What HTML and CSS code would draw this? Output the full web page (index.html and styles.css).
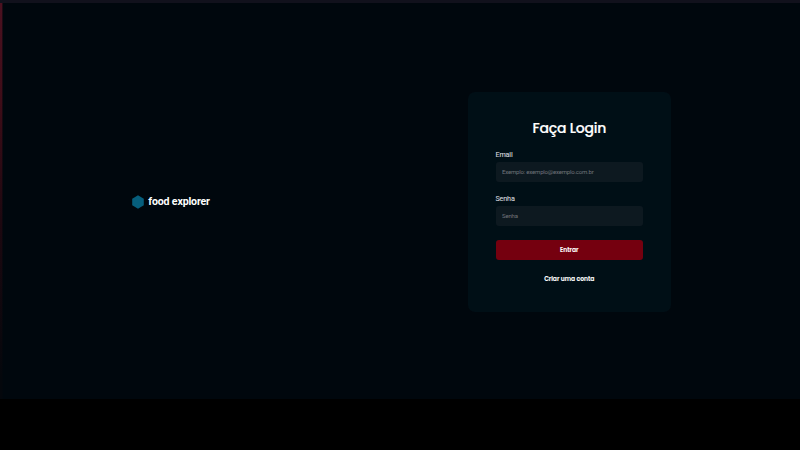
FILE: index.html
```html
<!DOCTYPE html>
<html lang="pt-BR">
<head>
<meta charset="utf-8">
<title>food explorer</title>
<link rel="stylesheet" href="styles.css">
</head>
<body>
<div class="window">
  <div class="edge"></div>
  <main class="page">
    <div class="brand">
      <svg class="logo" viewBox="0 0 12 14"><path d="M6 .3 11.8 3.7V10.3L6 13.7.2 10.3V3.7Z" fill="#065e7c"/></svg>
      <span class="brand-name">food explorer</span>
    </div>
    <form class="card">
      <h1 class="title"><span>Faça Login</span></h1>
      <label class="label" for="email">Email</label>
      <input class="field" id="email" type="text" placeholder="Exemplo: exemplo@exemplo.com.br">
      <label class="label" for="senha">Senha</label>
      <input class="field" id="senha" type="password" placeholder="Senha">
      <button class="submit" type="button">Entrar</button>
      <a class="signup">Criar uma conta</a>
    </form>
  </main>
</div>
</body>
</html>
```
FILE: styles.css
```css
* { box-sizing: border-box; }
body {
  margin: 0;
  height: 450px;
  overflow: hidden;
  background: #000;
  color: #fff;
  font-family: Roboto, sans-serif;
}
.window {
  display: flex;
  height: 399px;
  background: #00070d;
  border-top: 3px solid #11111c;
}
.edge {
  width: 3px;
  flex: none;
  background: linear-gradient(90deg, transparent 2px, #00070d99 2px), linear-gradient(#4b1120, #3e0d18 25%, #1d0810 55%, #04070c 95%);
}
.page {
  flex: 1;
  display: flex;
  justify-content: space-between;
  align-items: flex-start;
  padding: 89px 129px 0;
}
.brand {
  display: flex;
  align-items: center;
  gap: 4.3px;
  margin-top: 102px;
  height: 15px;
}
.logo { width: 12px; height: 14px; }
.brand-name {
  font-size: 10.6px;
  font-weight: 700;
  line-height: 14px;
  letter-spacing: -0.16px;
  white-space: nowrap;
}
.card {
  display: flex;
  flex-direction: column;
  width: 203px;
  height: 220px;
  padding: 27px 28px 0 27.5px;
  border-radius: 7px;
  background: #000f16;
}
.title {
  margin: 0 0 13px;
  height: 18px;
  font: 500 14px/18px Poppins, Inter, sans-serif;
  letter-spacing: -0.2px;
  text-align: center;
  -webkit-text-stroke: 0.2px #fff;
}
.label {
  height: 9px;
  margin-bottom: 3px;
  font-size: 7.2px;
  line-height: 9px;
  letter-spacing: -0.15px;
  color: #d0d2d8;
  -webkit-text-stroke: 0.1px #d0d2d8;
}
.field {
  width: 100%;
  height: 20px;
  margin: 0 0 12px;
  padding: 0 6.6px;
  border: 0;
  border-radius: 3px;
  background: #0d1920;
  color: #fff;
  font: 400 6px/20px Roboto, sans-serif;
  letter-spacing: -0.19px;
}
.field::placeholder { color: #71757b; opacity: 1; }
.submit {
  flex: none;
  height: 20.8px;
  margin: 1.6px 0 13.6px;
  padding: 0.4px 0 0;
  border: 0;
  border-radius: 3px;
  background: #75000f;
  color: #fff;
  font: 600 6px/20px Poppins, Inter, sans-serif;
  -webkit-text-stroke: 0.12px #fff;
}
.signup {
  font: 600 6px/10px Poppins, Inter, sans-serif;
  text-align: center;
  -webkit-text-stroke: 0.12px #fff;
}
```
